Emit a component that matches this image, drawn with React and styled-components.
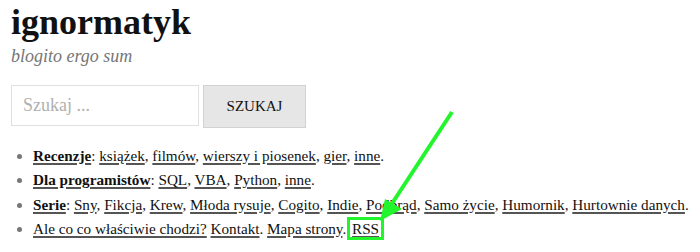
import styled, { createGlobalStyle, css } from "styled-components";

const GlobalStyle = createGlobalStyle`
  html, body {
    margin: 0;
    padding: 0;
    background: #fff;
  }
  body {
    font-family: "Liberation Serif", "Times New Roman", serif;
    color: #1a1a1a;
  }
`;

const Page = styled.div`
  position: relative;
  width: 700px;
  height: 252px;
  padding: 0 0 0 11px;
  box-sizing: border-box;
  overflow: hidden;
`;

const Title = styled.h1`
  margin: 0;
  padding-top: 1px;
  font-size: 36px;
  line-height: 42px;
  font-weight: 700;
  color: #111;
`;

const Tagline = styled.p`
  margin: 0;
  font-size: 18px;
  line-height: 26px;
  font-style: italic;
  color: #767676;
`;

const SearchForm = styled.form`
  display: flex;
  gap: 4px;
  margin-top: 16px;
  align-items: flex-start;
`;

const SearchInput = styled.input`
  width: 188px;
  height: 41px;
  box-sizing: border-box;
  padding: 0 11px;
  border: 1px solid #e0e0e0;
  font-family: "Liberation Serif", "Times New Roman", serif;
  font-size: 18px;
  color: #333;
  outline: none;
  &::placeholder {
    color: #b0b0b0;
    font-family: "Liberation Serif", "Times New Roman", serif;
  }
`;

const SearchButton = styled.button`
  width: 103px;
  height: 43px;
  box-sizing: border-box;
  background: #e6e6e6;
  border: 1px solid #d2d2d2;
  font-family: "Liberation Serif", "Times New Roman", serif;
  font-size: 15px;
  color: #111;
  cursor: pointer;
`;

const Menu = styled.ul`
  margin: 16px 0 0;
  padding-left: 22px;
  font-size: 15.2px;
  line-height: 24.4px;
  li::marker {
    color: #777;
  }
`;

const Item = styled.li``;

const Link = styled.a`
  color: #111;
  text-decoration: underline;
  text-decoration-thickness: 2px;
  text-decoration-color: #555;
  text-underline-offset: 2px;
  font-weight: ${(p) => (p.$bold ? 700 : 400)};
  ${(p) =>
    p.$highlight &&
    css`
      outline: 3px solid #22f52c;
      outline-offset: 0;
      padding: 0 2px;
    `}
`;

const Arrow = styled.svg`
  position: absolute;
  left: 0;
  top: 0;
  pointer-events: none;
`;

const links = (words) =>
  words.map((w, i) => (
    <span key={w}>
      <Link href="#">{w}</Link>
      {i < words.length - 1 ? ", " : "."}
    </span>
  ));

export default function App() {
  return (
    <Page>
      <GlobalStyle />
      <Title>ignormatyk</Title>
      <Tagline>blogito ergo sum</Tagline>
      <SearchForm onSubmit={(e) => e.preventDefault()}>
        <SearchInput placeholder="Szukaj ..." />
        <SearchButton>SZUKAJ</SearchButton>
      </SearchForm>
      <Menu>
        <Item>
          <Link href="#" $bold>Recenzje</Link>:{" "}
          {links(["książek", "filmów", "wierszy i piosenek", "gier", "inne"])}
        </Item>
        <Item>
          <Link href="#" $bold>Dla programistów</Link>:{" "}
          {links(["SQL", "VBA", "Python", "inne"])}
        </Item>
        <Item>
          <Link href="#" $bold>Serie</Link>:{" "}
          {links([
            "Sny",
            "Fikcja",
            "Krew",
            "Młoda rysuje",
            "Cogito",
            "Indie",
            "Podbrąd",
            "Samo życie",
            "Humornik",
            "Hurtownie danych",
          ])}
        </Item>
        <Item>
          <Link href="#">Ale co co właściwie chodzi?</Link>{" "}
          <Link href="#">Kontakt</Link>. <Link href="#">Mapa strony</Link>.{" "}
          <Link href="#" $highlight>RSS</Link>.
        </Item>
      </Menu>
      <Arrow width="700" height="252" viewBox="0 0 700 252">
        <line x1="452" y1="112" x2="391" y2="205" stroke="#22f52c" strokeWidth="4" />
        <polygon points="380,221 385,199 402,209" fill="#22f52c" />
      </Arrow>
    </Page>
  );
}
